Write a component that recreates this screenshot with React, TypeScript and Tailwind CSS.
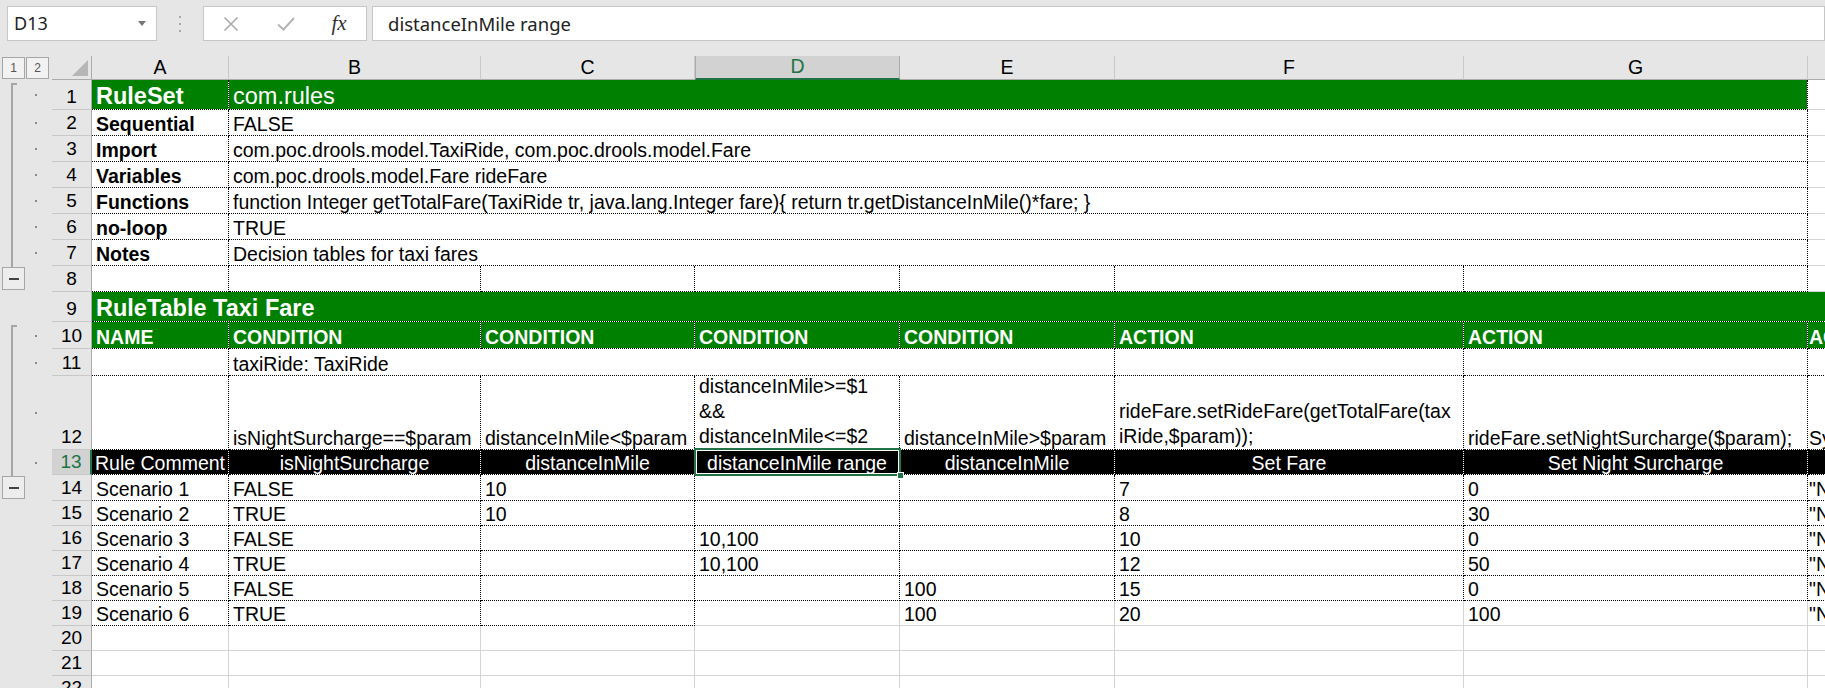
import React from "react";

const SANS = "font-['Liberation_Sans',Arial,sans-serif]";
const UI = "font-['Noto_Sans','Open_Sans',sans-serif]";

const DOT = "border-r border-b border-dotted border-black bg-clip-padding";
const GRID = "border-r border-b border-solid border-[#d4d4d4]";
const GREEN = "bg-[#008000] text-white";
const BLACK = "bg-black text-white justify-center";
const HPAD = "!pl-[1px]";

type Kind = "start" | "line" | "minus" | undefined;

function Gutter({ kind, dot }: { kind?: Kind; dot?: boolean }) {
  return (
    <div className="w-[52px] shrink-0 h-full bg-[#e6e6e6] flex">
      <div className="w-[28px] h-full flex flex-col">
        {kind === "start" && (
          <div className="ml-[11px] mt-[3px] w-[6px] flex-1 border-l-2 border-t-2 border-[#a6a6a6]" />
        )}
        {kind === "line" && <div className="ml-[11px] w-[2px] h-full bg-[#a6a6a6]" />}
        {kind === "minus" && (
          <div className="h-full flex flex-col">
            <div className="ml-[11px] w-[2px] h-[1px] bg-[#a6a6a6]" />
            <div className="ml-[2px] w-[23px] h-[23px] border border-[#a6a6a6] bg-[#ededed] flex items-center justify-center">
              <div className="w-[10px] h-[2px] bg-[#444]" />
            </div>
          </div>
        )}
      </div>
      <div className="flex-1 flex items-center">
        {dot && <div className="ml-[7px] w-[2px] h-[2px] bg-[#8a8a8a]" />}
      </div>
    </div>
  );
}

function RowHead({ n, sel }: { n: number; sel?: boolean }) {
  return (
    <div
      className={`w-[40px] shrink-0 h-full flex items-end justify-center border-b border-b-[#c8c8c8] pb-[1px] text-[19px] leading-[22px] ${SANS} ${
        sel
          ? "bg-[#d2d2d2] text-[#217346] border-r-2 border-r-[#217346]"
          : "bg-[#e6e6e6] text-black border-r border-r-[#ababab]"
      }`}
    >
      {n}
    </div>
  );
}

function Row({
  n,
  h,
  kind,
  dot,
  sel,
  children,
}: {
  n: number;
  h: string;
  kind?: Kind;
  dot?: boolean;
  sel?: boolean;
  children?: React.ReactNode;
}) {
  return (
    <div className={`flex shrink-0 bg-white ${h}`}>
      <Gutter kind={kind} dot={dot} />
      <RowHead n={n} sel={sel} />
      {children}
    </div>
  );
}

function Cell({
  w,
  cls = "",
  children,
}: {
  w: string;
  cls?: string;
  children?: React.ReactNode;
}) {
  return (
    <div
      className={`${w} shrink-0 h-full flex items-end px-[4px] overflow-hidden whitespace-nowrap text-[19.5px] leading-[22px] ${SANS} ${cls}`}
    >
      {children}
    </div>
  );
}

const WA = "w-[137px]";
const WB = "w-[252px]";
const WC = "w-[214px]";
const WD = "w-[205px]";
const WE = "w-[215px]";
const WF = "w-[349px]";
const WG = "w-[344px]";
const WH = "w-[200px]";
const WBG = "w-[1579px]";
const WBE = "w-[886px]";
const WALL = "w-[1900px]";

function Blank8() {
  return (
    <>
      <Cell w={WA} cls={DOT} />
      <Cell w={WB} cls={DOT} />
      <Cell w={WC} cls={DOT} />
      <Cell w={WD} cls={DOT} />
      <Cell w={WE} cls={DOT} />
      <Cell w={WF} cls={DOT} />
      <Cell w={WG} cls={DOT} />
      <Cell w={WH} cls={GRID} />
    </>
  );
}

function GridRow() {
  return (
    <>
      <Cell w={WA} cls={GRID} />
      <Cell w={WB} cls={GRID} />
      <Cell w={WC} cls={GRID} />
      <Cell w={WD} cls={GRID} />
      <Cell w={WE} cls={GRID} />
      <Cell w={WF} cls={GRID} />
      <Cell w={WG} cls={GRID} />
      <Cell w={WH} cls={GRID} />
    </>
  );
}

const meta: [number, string, string][] = [
  [2, "Sequential", "FALSE"],
  [3, "Import", "com.poc.drools.model.TaxiRide, com.poc.drools.model.Fare"],
  [4, "Variables", "com.poc.drools.model.Fare rideFare"],
  [
    5,
    "Functions",
    "function Integer getTotalFare(TaxiRide tr, java.lang.Integer fare){ return tr.getDistanceInMile()*fare; }",
  ],
  [6, "no-loop", "TRUE"],
  [7, "Notes", "Decision tables for taxi fares"],
];

const scen: {
  n: number;
  h: string;
  a: string;
  b: string;
  c: string;
  d: string;
  e: string;
  f: string;
  g: string;
}[] = [
  { n: 14, h: "h-[26px]", a: "Scenario 1", b: "FALSE", c: "10", d: "", e: "", f: "7", g: "0" },
  { n: 15, h: "h-[25px]", a: "Scenario 2", b: "TRUE", c: "10", d: "", e: "", f: "8", g: "30" },
  { n: 16, h: "h-[25px]", a: "Scenario 3", b: "FALSE", c: "", d: "10,100", e: "", f: "10", g: "0" },
  { n: 17, h: "h-[25px]", a: "Scenario 4", b: "TRUE", c: "", d: "10,100", e: "", f: "12", g: "50" },
  { n: 18, h: "h-[25px]", a: "Scenario 5", b: "FALSE", c: "", d: "", e: "100", f: "15", g: "0" },
  { n: 19, h: "h-[25px]", a: "Scenario 6", b: "TRUE", c: "", d: "", e: "100", f: "20", g: "100" },
];

const cols: { w: string; l: string; sel?: boolean }[] = [
  { w: "w-[137px]", l: "A" },
  { w: "w-[252px]", l: "B" },
  { w: "w-[214px]", l: "C" },
  { w: "w-[205px]", l: "D", sel: true },
  { w: "w-[215px]", l: "E" },
  { w: "w-[349px]", l: "F" },
  { w: "w-[344px]", l: "G" },
  { w: "w-[200px]", l: "H" },
];

export default function App() {
  return (
    <div className="w-[1825px] h-[688px] overflow-hidden bg-white flex flex-col">
      {/* formula bar */}
      <div className="h-[56px] shrink-0 bg-[#e6e6e6] flex items-start pt-[6px]">
        <div className="ml-[7px] w-[150px] h-[35px] bg-white border border-[#c6c6c6] flex items-center justify-between pl-[6px] pr-[10px]">
          <span className={`text-[18px] text-[#222] ${UI}`}>D13</span>
          <svg width="8" height="5" viewBox="0 0 8 5">
            <polygon points="0,0 8,0 4,5" fill="#777" />
          </svg>
        </div>
        <div className="w-[46px] h-[35px] flex items-center justify-center">
          <svg width="4" height="16" viewBox="0 0 4 16">
            <rect x="1" y="0" width="2" height="2" fill="#a8a8a8" />
            <rect x="1" y="7" width="2" height="2" fill="#a8a8a8" />
            <rect x="1" y="14" width="2" height="2" fill="#a8a8a8" />
          </svg>
        </div>
        <div className="w-[164px] h-[35px] bg-white border border-[#c6c6c6] flex items-center">
          <div className="w-[54px] flex justify-center">
            <svg width="16" height="16" viewBox="0 0 16 16">
              <path d="M1.5 1.5 L14.5 14.5 M14.5 1.5 L1.5 14.5" stroke="#a8a8a8" strokeWidth="1.5" />
            </svg>
          </div>
          <div className="w-[56px] flex justify-center">
            <svg width="18" height="14" viewBox="0 0 18 14">
              <path d="M1 7.5 L6.5 12.5 L17 1" stroke="#b4b4b4" strokeWidth="2" fill="none" />
            </svg>
          </div>
          <div className="w-[50px] flex justify-center">
            <span className="font-['Liberation_Serif',serif] italic text-[21px] leading-none text-[#333]">
              fx
            </span>
          </div>
        </div>
        <div className="ml-[5px] flex-1 h-[35px] bg-white border border-[#c6c6c6] flex items-center pl-[15px]">
          <span className={`text-[18.5px] text-[#222] ${UI}`}>distanceInMile range</span>
        </div>
      </div>

      {/* column headers */}
      <div className={`h-[24px] shrink-0 flex bg-[#e6e6e6] ${SANS}`}>
        <div className="w-[52px] shrink-0 flex items-center gap-[1px] pl-[2px]">
          <div className="w-[23px] h-[22px] border border-[#a6a6a6] bg-[#f2f2f2] text-[12px] text-[#555] flex items-center justify-center">
            1
          </div>
          <div className="w-[23px] h-[22px] border border-[#a6a6a6] bg-[#f2f2f2] text-[12px] text-[#555] flex items-center justify-center">
            2
          </div>
        </div>
        <div className="w-[40px] shrink-0 flex items-end justify-end pr-[3px] pb-[3px] border-r border-b border-[#ababab]">
          <svg width="16" height="16" viewBox="0 0 16 16">
            <polygon points="16,0 16,16 0,16" fill="#b6b6b6" />
          </svg>
        </div>
        {cols.map((c) => (
          <div
            key={c.l}
            className={`${c.w} shrink-0 flex items-center justify-center text-[19.5px] ${
              c.sel
                ? "bg-[#d2d2d2] text-[#217346] border-b-2 border-b-[#217346] border-x border-x-[#ababab]"
                : "text-black border-r border-r-[#c8c8c8] border-b border-b-[#ababab]"
            }`}
          >
            {c.l}
          </div>
        ))}
      </div>

      {/* rows */}
      <Row n={1} h="h-[30px]" kind="start" dot>
        <Cell w={WA} cls={`${GREEN} ${DOT} font-bold text-[23.5px] leading-[26px]`}>
          RuleSet
        </Cell>
        <Cell w={WBG} cls={`${GREEN} ${DOT} text-[23.5px] leading-[26px]`}>
          com.rules
        </Cell>
        <Cell w={WH} cls={GRID} />
      </Row>

      {meta.map(([n, label, val]) => (
        <Row key={n} n={n} h="h-[26px]" kind="line" dot>
          <Cell w={WA} cls={`${DOT} font-bold`}>{label}</Cell>
          <Cell w={WBG} cls={DOT}>
            {val}
          </Cell>
          <Cell w={WH} cls={GRID} />
        </Row>
      ))}

      <Row n={8} h="h-[26px]" kind="minus">
        <Blank8 />
      </Row>

      <Row n={9} h="h-[30px]">
        <Cell w={WALL} cls={`${GREEN} border-b border-dotted border-black bg-clip-padding font-bold text-[23.5px] leading-[26px]`}>
          RuleTable Taxi Fare
        </Cell>
      </Row>

      <Row n={10} h="h-[27px]" kind="start" dot>
        <Cell w={WA} cls={`${GREEN} ${DOT} font-bold`}>NAME</Cell>
        <Cell w={WB} cls={`${GREEN} ${DOT} font-bold`}>CONDITION</Cell>
        <Cell w={WC} cls={`${GREEN} ${DOT} font-bold`}>CONDITION</Cell>
        <Cell w={WD} cls={`${GREEN} ${DOT} font-bold`}>CONDITION</Cell>
        <Cell w={WE} cls={`${GREEN} ${DOT} font-bold`}>CONDITION</Cell>
        <Cell w={WF} cls={`${GREEN} ${DOT} font-bold`}>ACTION</Cell>
        <Cell w={WG} cls={`${GREEN} ${DOT} font-bold`}>ACTION</Cell>
        <Cell w={WH} cls={`${GREEN} ${DOT} font-bold ${HPAD}`}>ACTION</Cell>
      </Row>

      <Row n={11} h="h-[27px]" kind="line" dot>
        <Cell w={WA} cls={DOT} />
        <Cell w={WBE} cls={DOT}>
          taxiRide: TaxiRide
        </Cell>
        <Cell w={WF} cls={DOT} />
        <Cell w={WG} cls={DOT} />
        <Cell w={WH} cls={DOT} />
      </Row>

      <Row n={12} h="h-[74px]" kind="line" dot>
        <Cell w={WA} cls={DOT} />
        <Cell w={WB} cls={DOT}>
          isNightSurcharge==$param
        </Cell>
        <Cell w={WC} cls={DOT}>
          distanceInMile&lt;$param
        </Cell>
        <Cell w={WD} cls={`${DOT} leading-[25px]`}>
          <div>
            distanceInMile&gt;=$1
            <br />
            &amp;&amp;
            <br />
            distanceInMile&lt;=$2
          </div>
        </Cell>
        <Cell w={WE} cls={DOT}>
          distanceInMile&gt;$param
        </Cell>
        <Cell w={WF} cls={`${DOT} leading-[25px]`}>
          <div>
            rideFare.setRideFare(getTotalFare(tax
            <br />
            iRide,$param));
          </div>
        </Cell>
        <Cell w={WG} cls={DOT}>
          rideFare.setNightSurcharge($param);
        </Cell>
        <Cell w={WH} cls={`${DOT} ${HPAD}`}>
          Sy
        </Cell>
      </Row>

      <Row n={13} h="h-[25px]" kind="line" dot sel>
        <Cell w={WA} cls={`${BLACK} ${DOT}`}>Rule Comment</Cell>
        <Cell w={WB} cls={`${BLACK} ${DOT}`}>isNightSurcharge</Cell>
        <Cell w={WC} cls={`${BLACK} ${DOT}`}>distanceInMile</Cell>
        <div className={`${WD} shrink-0 h-full relative`}>
          <Cell w="w-full" cls={`${BLACK} ${DOT}`}>
            distanceInMile range
          </Cell>
          <div className="absolute z-10 left-[-1px] top-[-2px] right-[-1px] bottom-[-1px] border-2 border-[#217346]">
            <div className="w-full h-full border border-white" />
          </div>
          <div className="absolute z-20 right-[-4px] bottom-[-4px] w-[7px] h-[7px] bg-[#217346] border border-white" />
        </div>
        <Cell w={WE} cls={`${BLACK} ${DOT}`}>distanceInMile</Cell>
        <Cell w={WF} cls={`${BLACK} ${DOT}`}>Set Fare</Cell>
        <Cell w={WG} cls={`${BLACK} ${DOT}`}>Set Night Surcharge</Cell>
        <Cell w={WH} cls={`${BLACK} ${DOT}`} />
      </Row>

      {scen.map((s) => (
        <Row key={s.n} n={s.n} h={s.h} kind={s.n === 14 ? "minus" : undefined}>
          <Cell w={WA} cls={DOT}>{s.a}</Cell>
          <Cell w={WB} cls={DOT}>{s.b}</Cell>
          <Cell w={WC} cls={DOT}>{s.c}</Cell>
          <Cell w={WD} cls={s.n === 19 ? GRID : DOT}>{s.d}</Cell>
          <Cell w={WE} cls={s.n === 19 ? GRID : DOT}>{s.e}</Cell>
          <Cell w={WF} cls={s.n === 19 ? GRID : DOT}>{s.f}</Cell>
          <Cell w={WG} cls={s.n === 19 ? GRID : DOT}>{s.g}</Cell>
          <Cell w={WH} cls={`${s.n === 19 ? GRID : DOT} ${HPAD}`}>&quot;N</Cell>
        </Row>
      ))}

      <Row n={20} h="h-[25px]">
        <GridRow />
      </Row>
      <Row n={21} h="h-[25px]">
        <GridRow />
      </Row>
      <Row n={22} h="h-[25px]">
        <GridRow />
      </Row>
    </div>
  );
}
